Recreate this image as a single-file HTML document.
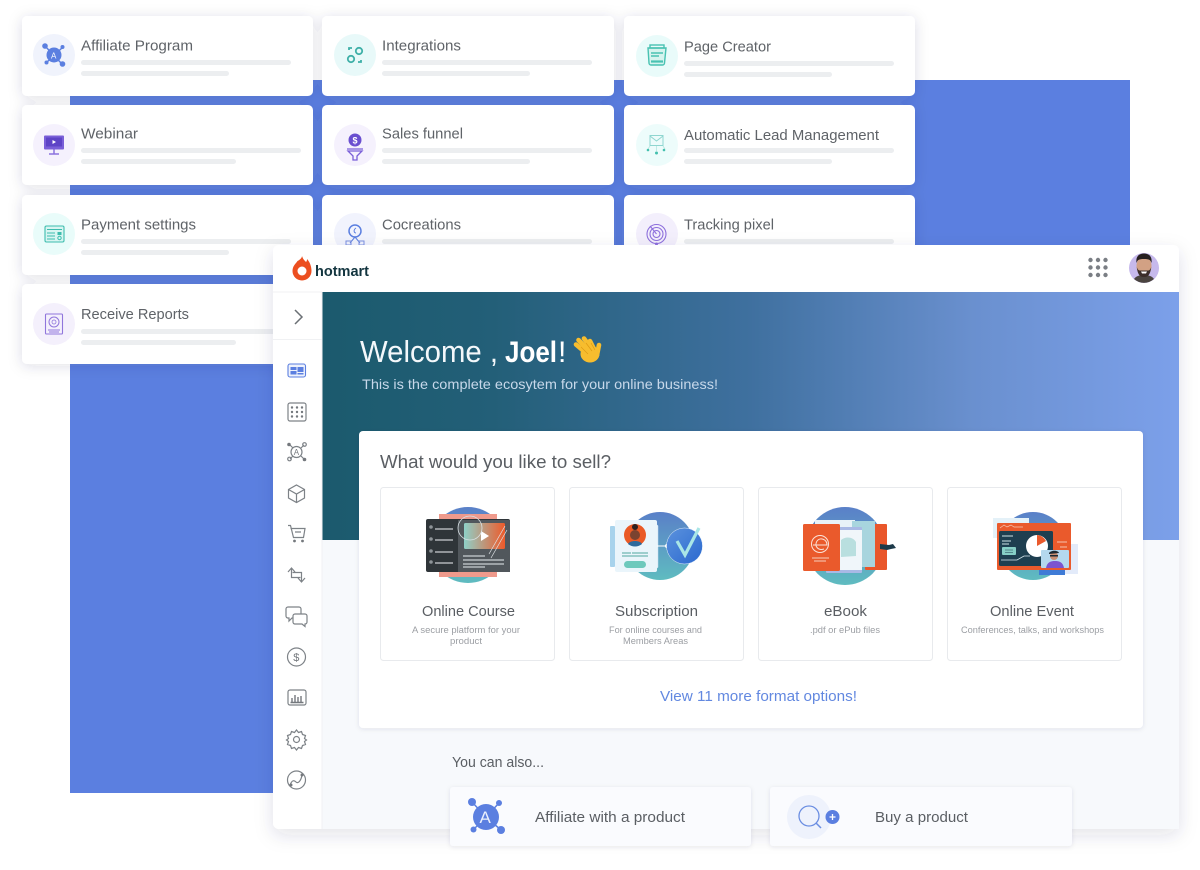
<!DOCTYPE html>
<html lang="en"><head><meta charset="utf-8"><title>Hotmart</title>
<style>
html,body{margin:0;padding:0;background:#fff;width:1200px;height:870px;overflow:hidden}
svg{display:block;filter:blur(.3px)}
text{font-family:"Liberation Sans",sans-serif}
.t{font-size:15px;fill:#5f6368}
.l{fill:#eceef0}
.ic{fill:none;stroke:#7d8287;stroke-width:1.2}
</style></head><body>
<svg width="1200" height="870" viewBox="0 0 1200 870" xmlns="http://www.w3.org/2000/svg">
<defs>
<filter id="s" x="-15%" y="-30%" width="130%" height="170%"><feDropShadow dx="0" dy="2" stdDeviation="7" flood-color="#2a3550" flood-opacity=".14"/></filter>
<filter id="w" x="-5%" y="-5%" width="110%" height="112%"><feDropShadow dx="0" dy="6" stdDeviation="9" flood-color="#2a3550" flood-opacity=".13"/></filter>
<filter id="b" x="-15%" y="-40%" width="130%" height="190%"><feDropShadow dx="0" dy="1" stdDeviation="2.5" flood-color="#2a3550" flood-opacity=".10"/></filter>
<linearGradient id="h" x1="0" x2="1" y1="0" y2="0"><stop offset="0" stop-color="#1b5a6d"/><stop offset=".2" stop-color="#235f78"/><stop offset=".5" stop-color="#3f709f"/><stop offset=".76" stop-color="#6a90cf"/><stop offset="1" stop-color="#7ca0ea"/></linearGradient>
<linearGradient id="c1" x1="0" x2="0" y1="0" y2="1"><stop offset="0" stop-color="#5a80c8"/><stop offset="1" stop-color="#5fbcc0"/></linearGradient>
<linearGradient id="v" x1="0" x2="1"><stop offset="0" stop-color="#8fd0c8"/><stop offset="1" stop-color="#ee5a2a"/></linearGradient>
<linearGradient id="ck" x1="0" x2="1" y1="0" y2="1"><stop offset="0" stop-color="#5b92dd"/><stop offset="1" stop-color="#2a68cf"/></linearGradient>
</defs>

<rect x="70" y="80" width="1060" height="713" fill="#5b7fe0"/>

<!-- small cards -->
<g filter="url(#s)" fill="#fff">
<rect x="22" y="16" width="291" height="80" rx="5"/><rect x="322" y="16" width="292" height="80" rx="5"/><rect x="624" y="16" width="291" height="80" rx="5"/>
<rect x="22" y="105" width="291" height="80" rx="5"/><rect x="322" y="105" width="292" height="80" rx="5"/><rect x="624" y="105" width="291" height="80" rx="5"/>
<rect x="22" y="195" width="291" height="80" rx="5"/><rect x="322" y="195" width="292" height="80" rx="5"/><rect x="624" y="195" width="291" height="80" rx="5"/>
<rect x="22" y="284" width="291" height="80" rx="5"/>
</g>

<!-- skeleton lines -->
<g class="l">
<rect x="81" y="60" width="210" height="5" rx="2.5"/><rect x="81" y="71" width="148" height="5" rx="2.5"/>
<rect x="382" y="60" width="210" height="5" rx="2.5"/><rect x="382" y="71" width="148" height="5" rx="2.5"/>
<rect x="684" y="61" width="210" height="5" rx="2.5"/><rect x="684" y="72" width="148" height="5" rx="2.5"/>
<rect x="81" y="148" width="220" height="5" rx="2.5"/><rect x="81" y="159" width="155" height="5" rx="2.5"/>
<rect x="382" y="148" width="210" height="5" rx="2.5"/><rect x="382" y="159" width="148" height="5" rx="2.5"/>
<rect x="684" y="148" width="210" height="5" rx="2.5"/><rect x="684" y="159" width="148" height="5" rx="2.5"/>
<rect x="81" y="239" width="210" height="5" rx="2.5"/><rect x="81" y="250" width="148" height="5" rx="2.5"/>
<rect x="382" y="239" width="210" height="5" rx="2.5"/><rect x="684" y="239" width="210" height="5" rx="2.5"/>
<rect x="81" y="329" width="210" height="5" rx="2.5"/><rect x="81" y="340" width="155" height="5" rx="2.5"/>
</g>

<!-- card labels -->
<g class="t">
<text x="81" y="50.5" textLength="112" lengthAdjust="spacingAndGlyphs">Affiliate Program</text>
<text x="382" y="50.5" textLength="79" lengthAdjust="spacingAndGlyphs">Integrations</text>
<text x="684" y="51.5" textLength="87" lengthAdjust="spacingAndGlyphs">Page Creator</text>
<text x="81" y="138.5" textLength="57" lengthAdjust="spacingAndGlyphs">Webinar</text>
<text x="382" y="138.5" textLength="81" lengthAdjust="spacingAndGlyphs">Sales funnel</text>
<text x="684" y="140" textLength="195" lengthAdjust="spacingAndGlyphs">Automatic Lead Management</text>
<text x="81" y="229.5" textLength="115" lengthAdjust="spacingAndGlyphs">Payment settings</text>
<text x="382" y="229.5" textLength="79" lengthAdjust="spacingAndGlyphs">Cocreations</text>
<text x="684" y="229.5" textLength="90" lengthAdjust="spacingAndGlyphs">Tracking pixel</text>
<text x="81" y="319" textLength="108" lengthAdjust="spacingAndGlyphs">Receive Reports</text>
</g>

<!-- card icons -->
<circle cx="54" cy="55" r="21" fill="#f0f3fc"/>
<g stroke="#5b7fe0" stroke-width="1.5"><path d="M45 46L62 64M63 47L46 63"/></g>
<g fill="#5b7fe0"><circle cx="54" cy="55" r="7.5"/><circle cx="45" cy="46" r="2.8"/><circle cx="62.5" cy="47" r="2"/><circle cx="46.5" cy="62.5" r="2"/><circle cx="62.5" cy="64" r="2.8"/></g>
<text x="51" y="58.5" font-size="8" fill="#fff">A</text>

<circle cx="355" cy="55" r="21" fill="#e8f9f9"/>
<g fill="none" stroke="#3fb0a8" stroke-width="1.8"><circle cx="359" cy="51" r="3.2"/><circle cx="351" cy="59" r="3.2"/><path d="M349 50v-2h3M361 60v2h-3"/></g>

<circle cx="657" cy="56" r="21" fill="#e9fbfa"/>
<g fill="none" stroke="#48c2b2" stroke-width="1.4"><path d="M648 48h18l-1.500 15a2 2 0 0 1-2 2h-11.500a2 2 0 0 1-2-2z" fill="#d5f3ee"/><rect x="650" y="45" width="14" height="3"/><path d="M651 61.500h12" stroke-width="2.2"/><path d="M651 53h12M651 56h8"/></g>

<circle cx="54" cy="145" r="21" fill="#f5f1fd"/>
<rect x="44" y="135.5" width="20" height="14" rx="1" fill="#7a5fd8"/><rect x="46" y="137.5" width="16" height="9" fill="#5e44c6"/>
<path d="M52.500 140l3.500 2-3.500 2z" fill="#fff"/><path d="M54 149.500v4M49 154h10" stroke="#8b72de" stroke-width="1.5"/>

<circle cx="355" cy="145" r="21" fill="#f5f1fd"/>
<circle cx="355" cy="140" r="6.5" fill="#6a4fd0"/><text x="352.5" y="143.5" font-size="9" fill="#fff" font-weight="bold">$</text>
<path d="M347 149h16M348 151l5 5v4l4 0v-4l5-5z" fill="none" stroke="#7a5fd8" stroke-width="1.3"/>

<circle cx="657" cy="145" r="21" fill="#edfcfb"/>
<rect x="650" y="135.5" width="13" height="10" fill="none" stroke="#8fd6d0" stroke-width="1"/><path d="M650 136l6.500 5 6.500-5" fill="none" stroke="#8fd6d0"/>
<path d="M656.500 146v5M650 146l-2 3M663 146l2 3" stroke="#b5e6e0" stroke-width=".8"/>
<g fill="#44c0ae"><circle cx="648" cy="150" r="1.3"/><circle cx="656.5" cy="153" r="1.5"/><circle cx="664" cy="150" r="1.3"/></g>

<circle cx="54" cy="234" r="21" fill="#e9fcfa"/>
<rect x="45" y="226" width="19" height="16" rx="1.5" fill="#d8f5f1" stroke="#3dbdae" stroke-width="1.1"/>
<path d="M47 229.500h15M47 233h8M47 236h8M47 239h8" stroke="#3dbdae" stroke-width=".9" fill="none"/><rect x="57.5" y="232" width="4" height="3" fill="#3dbdae"/><circle cx="59.5" cy="238" r="1.7" fill="none" stroke="#3dbdae"/>

<circle cx="355" cy="234" r="21" fill="#f1f3fd"/>
<circle cx="355" cy="231" r="6" fill="none" stroke="#5b7fe0" stroke-width="1.5"/><path d="M356 228c-3 2-2 5 0 5" fill="none" stroke="#5b7fe0"/>
<path d="M355 237l-5 6M355 237l5 6" stroke="#5b7fe0" fill="none"/><rect x="346" y="241" width="5" height="4" fill="none" stroke="#7a8fe0"/><rect x="359" y="241" width="5" height="4" fill="none" stroke="#7a8fe0"/>

<circle cx="657" cy="234" r="21" fill="#f3effc"/>
<g fill="none" stroke="#8d6fdc" stroke-width="1.1"><circle cx="656.5" cy="234" r="9.5"/><circle cx="656.5" cy="234" r="6.5"/><circle cx="656.5" cy="234" r="3.5"/><path d="M650 226l6.500 8"/></g><circle cx="656.5" cy="244" r="1.5" fill="#8d6fdc"/>

<circle cx="54" cy="324" r="21" fill="#f4f0fc"/>
<rect x="45.5" y="314" width="17" height="20" rx="1" fill="none" stroke="#9076dc" stroke-width="1.1"/><circle cx="54" cy="322" r="5" fill="none" stroke="#9076dc"/><circle cx="54" cy="322" r="2" fill="none" stroke="#9076dc" stroke-width=".8"/><path d="M48 330h12M49 332h10" stroke="#9076dc" stroke-width=".9"/>

<!-- main window -->
<rect x="273" y="245" width="906" height="584" rx="6" fill="#fff" filter="url(#w)"/>
<rect x="322" y="292" width="857" height="537" fill="#f7f9fc"/>
<rect x="322" y="292" width="857" height="248" fill="url(#h)"/>
<path d="M273 292h49M273 339.500h49" stroke="#f0f1f3"/>
<path d="M322 292v537" stroke="#f0f1f4"/>

<!-- logo -->
<path d="M302 256c1 3 2 4 4 6 1-1 1-2 1-3 3 3 4.500 8 4.500 12a9.500 9.500 0 0 1-19 0c0-5 3-7 5-10 2-1 4.500-3 4.500-5z" fill="#ec4f20"/>
<circle cx="302" cy="271" r="4.5" fill="#fff"/>
<text x="315" y="276" font-size="15" font-weight="bold" fill="#13353f" textLength="54" lengthAdjust="spacingAndGlyphs">hotmart</text>

<!-- top right -->
<g fill="#7a7e84"><circle cx="1090.5" cy="260" r="2.2"/><circle cx="1098" cy="260" r="2.2"/><circle cx="1105.5" cy="260" r="2.2"/><circle cx="1090.5" cy="267.5" r="2.2"/><circle cx="1098" cy="267.5" r="2.2"/><circle cx="1105.5" cy="267.5" r="2.2"/><circle cx="1090.5" cy="275" r="2.2"/><circle cx="1098" cy="275" r="2.2"/><circle cx="1105.5" cy="275" r="2.2"/></g>
<circle cx="1144" cy="268" r="15" fill="#c6b9ec"/>
<path d="M1134 279c2-3 6-4 10-4s8 1 10 4a15 15 0 0 1-20 0z" fill="#4a4440"/>
<ellipse cx="1144" cy="266" rx="7.5" ry="10" fill="#d2a184"/>
<path d="M1136.500 263c-1-7 3-9.500 7.500-9.500s8.500 2.500 7.500 9.500c-1-3-2-4-7.500-4s-6.500 1-7.500 4z" fill="#26201f"/>
<path d="M1136.800 267c1 9 4 10 7.200 10s6.200-1 7.200-10c-1 3-2 3.500-3.500 3.500h-7.400c-1.500 0-2.500-.5-3.500-3.500z" fill="#3b2e2a"/><path d="M1141 271.500h6l-1 2h-4z" fill="#fff"/>

<!-- sidebar -->
<path d="M295 310l7 7-7 7" fill="none" stroke="#6b7075" stroke-width="1.5"/>
<rect x="288" y="364" width="17.5" height="13" rx="2" fill="#eef2fc" stroke="#5b7fe0" stroke-width="1.1"/>
<g fill="#5b7fe0"><rect x="290.5" y="367" width="6" height="3"/><rect x="290.5" y="371" width="6" height="3.5"/><rect x="297.5" y="367" width="6" height="5"/><rect x="297.5" y="373" width="6" height="1.5"/></g>
<rect x="288" y="403" width="18" height="18" rx="2" class="ic"/>
<g fill="#74787d"><circle cx="292" cy="407.5" r="1.2"/><circle cx="297" cy="407.5" r="1.2"/><circle cx="302" cy="407.5" r="1.2"/><circle cx="292" cy="412" r="1.2"/><circle cx="297" cy="412" r="1.2"/><circle cx="302" cy="412" r="1.2"/><circle cx="292" cy="416.5" r="1.2"/><circle cx="297" cy="416.5" r="1.2"/><circle cx="302" cy="416.5" r="1.2"/></g>
<circle cx="296.5" cy="452" r="5.5" class="ic"/><text x="293.8" y="455" font-size="8" fill="#74787d">A</text>
<path d="M290 445l3 3M304 445l-3 3M290 459l3-3M304 459l-3-3" class="ic"/><circle cx="289" cy="444.5" r="1.8" fill="#74787d"/><circle cx="304.5" cy="444.5" r="1.8" class="ic"/><circle cx="289.5" cy="459" r="1.8" class="ic"/><circle cx="304.5" cy="459.5" r="1.8" fill="#74787d"/>
<path d="M296.500 485l8 4.500v8.500l-8 4.500-8-4.500v-8.500zM288.500 489.500l8 4.500 8-4.500M296.500 494v8.500" class="ic"/>
<path d="M288 525.500h2.500l3 12h10l1.500-9h-14.500M295 532h6" class="ic"/>
<circle cx="294.5" cy="541" r="1.4" fill="#74787d"/><circle cx="302.5" cy="541" r="1.4" fill="#74787d"/>
<path d="M288 572l3.500-4 3.500 4M291.500 568v9.500h9M305 578l-3.500 4-3.500-4M301.500 582v-9.500h-9" class="ic"/>
<path d="M288 607h11a2 2 0 0 1 2 2v7a2 2 0 0 1-2 2h-7l-3 3v-3h-1a2 2 0 0 1-2-2v-7a2 2 0 0 1 2-2z" class="ic"/>
<path d="M295 614h10a2 2 0 0 1 2 2v6a2 2 0 0 1-2 2v2.500l-3-2.500h-7a2 2 0 0 1-2-2v-6a2 2 0 0 1 2-2z" class="ic" style="fill:#fff"/>
<circle cx="296.5" cy="657" r="9" class="ic"/><text x="293.2" y="661" font-size="11" fill="#74787d">$</text>
<rect x="288" y="690" width="18" height="15" rx="2" class="ic"/>
<path d="M292 702v-4M295 702v-7M298 702v-5M301 702v-6M290.500 702.500h13" stroke="#74787d" stroke-width="1.4"/>
<path d="M296.500 730l2 2.500 3-1 1 3 3 1-1 3 2 1.500-2 1.500 1 3-3 1-1 3-3-1-2 2.500-2-2.500-3 1-1-3-3-1 1-3-2-1.500 2-1.500-1-3 3-1 1-3 3 1z" class="ic"/><circle cx="296.5" cy="739.5" r="3" class="ic"/>
<circle cx="296.5" cy="780" r="9" class="ic"/><path d="M290 785c2-5 4-5 6-3s5-1 6-7" class="ic" stroke-width="1.500"/><circle cx="302" cy="775" r="1.5" fill="#74787d"/><circle cx="291" cy="785" r="1.5" fill="#74787d"/>

<!-- hero text -->
<text x="360" y="362" font-size="31" fill="#f4f8fb" textLength="138" lengthAdjust="spacingAndGlyphs">Welcome ,</text>
<text x="505" y="362" font-size="30" font-weight="bold" fill="#fff" textLength="52" lengthAdjust="spacingAndGlyphs">Joel</text>
<text x="558" y="362" font-size="30" fill="#fff">!</text>
<g>
<g stroke="#f7bd2e" stroke-width="4.6" stroke-linecap="round" fill="none">
<path d="M586 353L576 344.500"/><path d="M588 350L578.500 340"/><path d="M591 348L584 338.500"/><path d="M594 349L590 341"/><path d="M597 355L599 345"/>
</g>
<ellipse cx="590" cy="354" rx="9.5" ry="8.500" fill="#f7bd2e"/>
<path d="M581 347l7 7M586 343l6 8M591 343l4 7" stroke="#dd9a14" stroke-width=".7" fill="none"/>
</g>
<text x="362" y="389" font-size="14" fill="#c7d8ea" textLength="356" lengthAdjust="spacingAndGlyphs">This is the complete ecosytem for your online business!</text>

<!-- white panel -->
<rect x="359" y="431" width="784" height="297" rx="4" fill="#fff" filter="url(#b)"/>
<text x="380" y="468" font-size="18" fill="#5a5e63" textLength="231" lengthAdjust="spacingAndGlyphs">What would you like to sell?</text>
<g fill="#fff" stroke="#e8eaed"><rect x="380.500" y="487.500" width="174" height="173" rx="3"/><rect x="569.500" y="487.500" width="174" height="173" rx="3"/><rect x="758.500" y="487.500" width="174" height="173" rx="3"/><rect x="947.500" y="487.500" width="174" height="173" rx="3"/></g>

<!-- Online course -->
<circle cx="468" cy="545" r="38" fill="url(#c1)"/>
<rect x="439" y="514" width="58" height="6" fill="#ef9a8c"/><rect x="439" y="571" width="58" height="6" fill="#ef9a8c"/>
<rect x="426" y="519" width="84" height="53" rx="2" fill="#2f3539"/>
<rect x="458" y="520" width="52" height="52" fill="#51575c"/>
<rect x="464" y="523" width="41" height="26" rx="1.5" fill="url(#v)"/>
<path d="M481 531l8 5-8 5z" fill="#fff"/><circle cx="470" cy="528" r="12" fill="none" stroke="#d9e2e6" stroke-width=".8"/>
<path d="M505 526l-16 28M507 530l-16 28" stroke="#dfe3e6" stroke-width=".7" fill="none"/>
<g stroke="#c9ced1" stroke-width="1.3"><path d="M435 529h18M435 540h18M435 552h18M435 563h18M463 556h22M463 560h41M463 564h41M463 567h22"/></g>
<g fill="#8e9498"><circle cx="431" cy="527" r="1.8"/><circle cx="431" cy="539" r="1.8"/><circle cx="431" cy="551" r="1.8"/><circle cx="431" cy="562" r="1.8"/></g>

<!-- Subscription -->
<circle cx="660" cy="546" r="34" fill="url(#c1)"/>
<rect x="610" y="526" width="5" height="41" rx="1" fill="#a8d3ec"/>
<rect x="650" y="525" width="8" height="43" rx="1" fill="#eaf4fb" stroke="#c6dff0" stroke-width=".5"/>
<rect x="615" y="520" width="42" height="52" rx="2" fill="#eaf5fb"/>
<circle cx="635" cy="535" r="11" fill="#ea5a26"/>
<circle cx="635" cy="535" r="5" fill="#7a4330"/><circle cx="635" cy="527" r="3" fill="#2c2020"/><path d="M628 544c2-4 12-4 14 0a11 11 0 0 1-14 0z" fill="#2d6a9c"/><path d="M622 553h9M632 553h16M622 556h26" stroke="#50a69f" stroke-width=".9"/>
<rect x="624" y="561" width="22" height="7" rx="3.5" fill="#6ec9bc"/>
<path d="M657 546h16" stroke="#fff"/><circle cx="667" cy="546" r="2" fill="#fff"/>
<circle cx="684.5" cy="546" r="18" fill="url(#ck)" stroke="#e5f0fa" stroke-width=".5"/>
<path d="M677 541l8 14 14-27" fill="none" stroke="#a9e6e6" stroke-width="3.2"/>

<!-- eBook -->
<circle cx="845" cy="546" r="39" fill="url(#c1)"/>
<rect x="865" y="524" width="22" height="46" rx="1" fill="#e9562a"/>
<path d="M880 544l9 1 4-1 3 4-5 1-4 1-7-1z" fill="#1d3a4a"/>
<rect x="815" y="520" width="40" height="50" fill="#e8f2f8"/>
<rect x="852" y="521" width="23" height="46" fill="#a8d5de"/>
<rect x="826" y="527" width="36" height="46" rx="1" fill="#a9b9e5"/>
<rect x="836" y="530" width="26" height="40" fill="#f0f6fa"/>
<path d="M841 540c5-4 12-3 15 2v14l-15 1z" fill="#b9dfdf"/>
<rect x="803" y="524" width="37" height="47" rx="1.5" fill="#ea5a2c"/>
<circle cx="820" cy="544" r="8.5" fill="none" stroke="#fbe3d8" stroke-width="1"/><path d="M813 545h14c0-6-7-8-10-4-3 5 1 10 7 8" fill="none" stroke="#fbe3d8" stroke-width="1"/>
<path d="M812 558h17M814 561h12" stroke="#f7cdbb" stroke-width="1.1"/>

<!-- Online event -->
<circle cx="1033" cy="546" r="34" fill="url(#c1)"/>
<rect x="993" y="518" width="36" height="20" fill="#e4f1f8"/>
<rect x="1058" y="544" width="20" height="30" fill="#e3ebfa"/>
<rect x="1039" y="565" width="26" height="10" fill="#3f7bd6"/>
<rect x="997" y="523" width="74" height="47" rx="1" fill="#ea5a2c"/>
<rect x="999" y="531" width="54" height="35" rx="1.5" fill="#1e3f50"/>
<path d="M1000 528l4-3 3 2 4-2 3 2h9" fill="none" stroke="#f6c9b5" stroke-width=".7"/><path d="M1057 542h10M1060 547h7" stroke="#f4c2ae"/>
<path d="M1002 536h11M1002 541h9M1002 544h7" stroke="#cfe3e6" stroke-width="1"/>
<rect x="1002" y="547" width="14" height="8" rx="1" fill="#86cfc6"/><path d="M1005 550h8M1005 552.500h8" stroke="#1e3f50" stroke-width=".6"/>
<circle cx="1037" cy="546" r="11" fill="#fff"/><path d="M1037 546v-11a11 11 0 0 1 9 6z" fill="#ea5a2c"/>
<path d="M1001 560h16l7-4h6" fill="none" stroke="#d8e9ee" stroke-width=".8"/>
<rect x="1041" y="550" width="28" height="18" rx="1" fill="#b4d8ee"/>
<path d="M1046 568c1-6 5-7 9-7s8 1 9 7z" fill="#7c54cf"/><circle cx="1054" cy="556" r="4" fill="#c98f72"/><path d="M1049 553c2-3 9-3 10 0l-10 1z" fill="#1d2a33"/><rect x="1050" y="555" width="8" height="1.5" fill="#1d2a33"/>

<!-- product labels -->
<g font-size="15" fill="#5a5e63">
<text x="422" y="616" textLength="93" lengthAdjust="spacingAndGlyphs">Online Course</text>
<text x="615" y="616" textLength="83" lengthAdjust="spacingAndGlyphs">Subscription</text>
<text x="824" y="616" textLength="43" lengthAdjust="spacingAndGlyphs">eBook</text>
<text x="990" y="616" textLength="84" lengthAdjust="spacingAndGlyphs">Online Event</text>
</g>
<g font-size="9" fill="#9b9ea3">
<text x="412" y="633" textLength="108" lengthAdjust="spacingAndGlyphs">A secure platform for your</text>
<text x="450" y="644" textLength="32" lengthAdjust="spacingAndGlyphs">product</text>
<text x="609" y="633" textLength="93" lengthAdjust="spacingAndGlyphs">For online courses and</text>
<text x="623" y="644" textLength="65" lengthAdjust="spacingAndGlyphs">Members Areas</text>
<text x="810" y="633" textLength="70" lengthAdjust="spacingAndGlyphs">.pdf or ePub files</text>
<text x="961" y="633" textLength="143" lengthAdjust="spacingAndGlyphs">Conferences, talks, and workshops</text>
</g>
<text x="660" y="701" font-size="15" fill="#6288e0" textLength="197" lengthAdjust="spacingAndGlyphs">View 11 more format options!</text>

<!-- you can also -->
<text x="452" y="767" font-size="14.5" fill="#5a5e63" textLength="92" lengthAdjust="spacingAndGlyphs">You can also...</text>
<g fill="#fafbfe" filter="url(#b)"><rect x="450" y="787" width="301" height="59" rx="3"/><rect x="770" y="787" width="302" height="59" rx="3"/></g>
<path d="M472 802L486 817L499 803M473 830L486 817L501 830" stroke="#5b7fe0" stroke-width="1.5" fill="none"/>
<g fill="#5b7fe0"><circle cx="486" cy="817" r="13"/><circle cx="472" cy="802" r="4"/><circle cx="499" cy="803" r="3"/><circle cx="473.5" cy="829.5" r="3"/><circle cx="501" cy="830" r="4"/></g>
<text x="479.5" y="823" font-size="17" fill="#eaf0fd">A</text>
<text x="535" y="822" font-size="15" fill="#5a5e63" textLength="150" lengthAdjust="spacingAndGlyphs">Affiliate with a product</text>
<circle cx="809" cy="817" r="22" fill="#eef2fc"/>
<circle cx="809" cy="816" r="10" fill="none" stroke="#6b8ee2" stroke-width="1.3"/><path d="M816 823l5 5" stroke="#6b8ee2" stroke-width="1.5"/>
<circle cx="832.5" cy="817" r="7" fill="#5b7fe0"/><path d="M829.500 817h6M832.500 814v6" stroke="#fff" stroke-width="1.3"/>
<text x="875" y="822" font-size="15" fill="#5a5e63" textLength="93" lengthAdjust="spacingAndGlyphs">Buy a product</text>
</svg>
</body></html>
